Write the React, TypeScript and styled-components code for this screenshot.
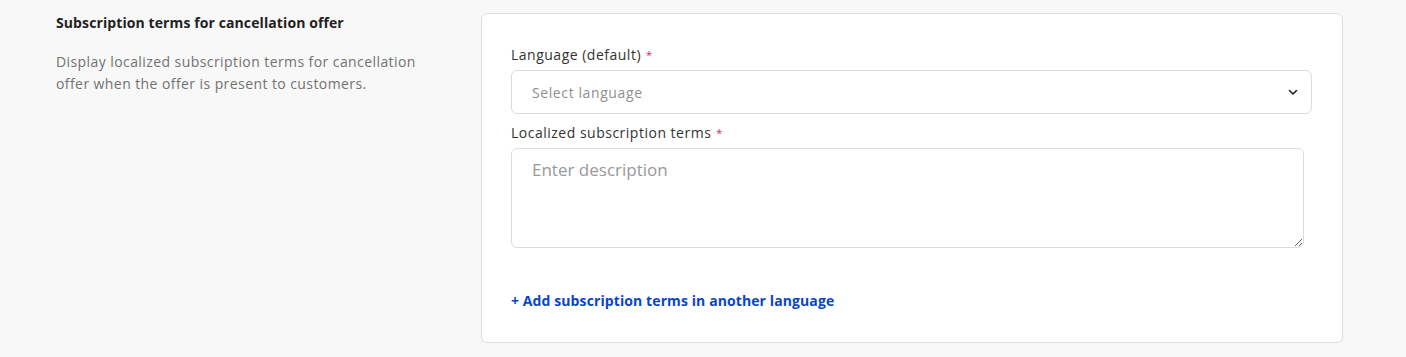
import React from "react";
import styled, { createGlobalStyle } from "styled-components";

const Global = createGlobalStyle`
  html, body { margin: 0; padding: 0; background: #f8f8f8; }
  body { font-family: "Open Sans", "Liberation Sans", sans-serif; -webkit-font-smoothing: antialiased; }
  * { box-sizing: border-box; }
`;

const Page = styled.div`
  display: grid;
  grid-template-columns: 425px 862px;
  padding: 13px 0 14px 56px;
  min-height: 357px;
`;

const Intro = styled.div`
  display: flex;
  flex-direction: column;
  gap: 18px;
  padding-right: 50px;
`;

const Title = styled.h3`
  margin: 0;
  font-size: 14px;
  line-height: 20px;
  font-weight: 700;
  letter-spacing: 0.1px;
  white-space: nowrap;
  color: #222;
`;

const Desc = styled.p`
  margin: 0;
  font-size: 14px;
  line-height: 22px;
  letter-spacing: 0.42px;
  color: #727272;
`;

const Card = styled.div`
  background: #fff;
  border: 1px solid #dedede;
  border-radius: 6px;
  padding: 31px 30px 32px 29px;
  display: flex;
  flex-direction: column;
  height: 330px;
`;

const Field = styled.div<{ $gap?: number }>`
  display: flex;
  flex-direction: column;
  gap: 5px;
  margin-bottom: ${(p) => p.$gap ?? 0}px;
`;

const Label = styled.label`
  font-size: 14px;
  line-height: 20px;
  letter-spacing: 0.5px;
  color: #333;
`;

const Req = styled.span`
  color: #e5195f;
  margin-left: 5px;
  font-size: 11px;
  vertical-align: top;
`;

const SelectBox = styled.div`
  height: 44px;
  border: 1px solid #dcdcdc;
  border-radius: 6px;
  display: flex;
  align-items: center;
  justify-content: space-between;
  padding: 0 12px 0 20px;
  font-size: 14px;
  letter-spacing: 0.6px;
  color: #8f8f8f;
`;

const TextArea = styled.textarea`
  width: calc(100% - 8px);
  height: 100px;
  border: 1px solid #dcdcdc;
  border-radius: 6px;
  padding: 10px 20px;
  font-family: inherit;
  font-size: 17px;
  line-height: 22px;
  color: #333;
  resize: vertical;
  &::placeholder { color: #999; }
`;

const AddLink = styled.a`
  margin-top: 43px;
  font-size: 14px;
  line-height: 20px;
  font-weight: 700;
  letter-spacing: 0.1px;
  color: #0a45c8;
  text-decoration: none;
  cursor: pointer;
`;

export default function App() {
  return (
    <>
      <Global />
      <Page>
        <Intro>
          <Title>Subscription terms for cancellation offer</Title>
          <Desc>
            Display localized subscription terms for cancellation offer when the offer is present to customers.
          </Desc>
        </Intro>
        <Card>
          <Field $gap={9}>
            <Label>
              Language (default)<Req>*</Req>
            </Label>
            <SelectBox>
              <span>Select language</span>
              <svg width="12" height="12" viewBox="0 0 12 12" fill="none">
                <path d="M2.5 4.5 6 8l3.5-3.5" stroke="#222" strokeWidth="1.6" strokeLinecap="round" strokeLinejoin="round" />
              </svg>
            </SelectBox>
          </Field>
          <Field>
            <Label>
              Localized subscription terms<Req>*</Req>
            </Label>
            <TextArea placeholder="Enter description" />
          </Field>
          <AddLink>+ Add subscription terms in another language</AddLink>
        </Card>
      </Page>
    </>
  );
}
